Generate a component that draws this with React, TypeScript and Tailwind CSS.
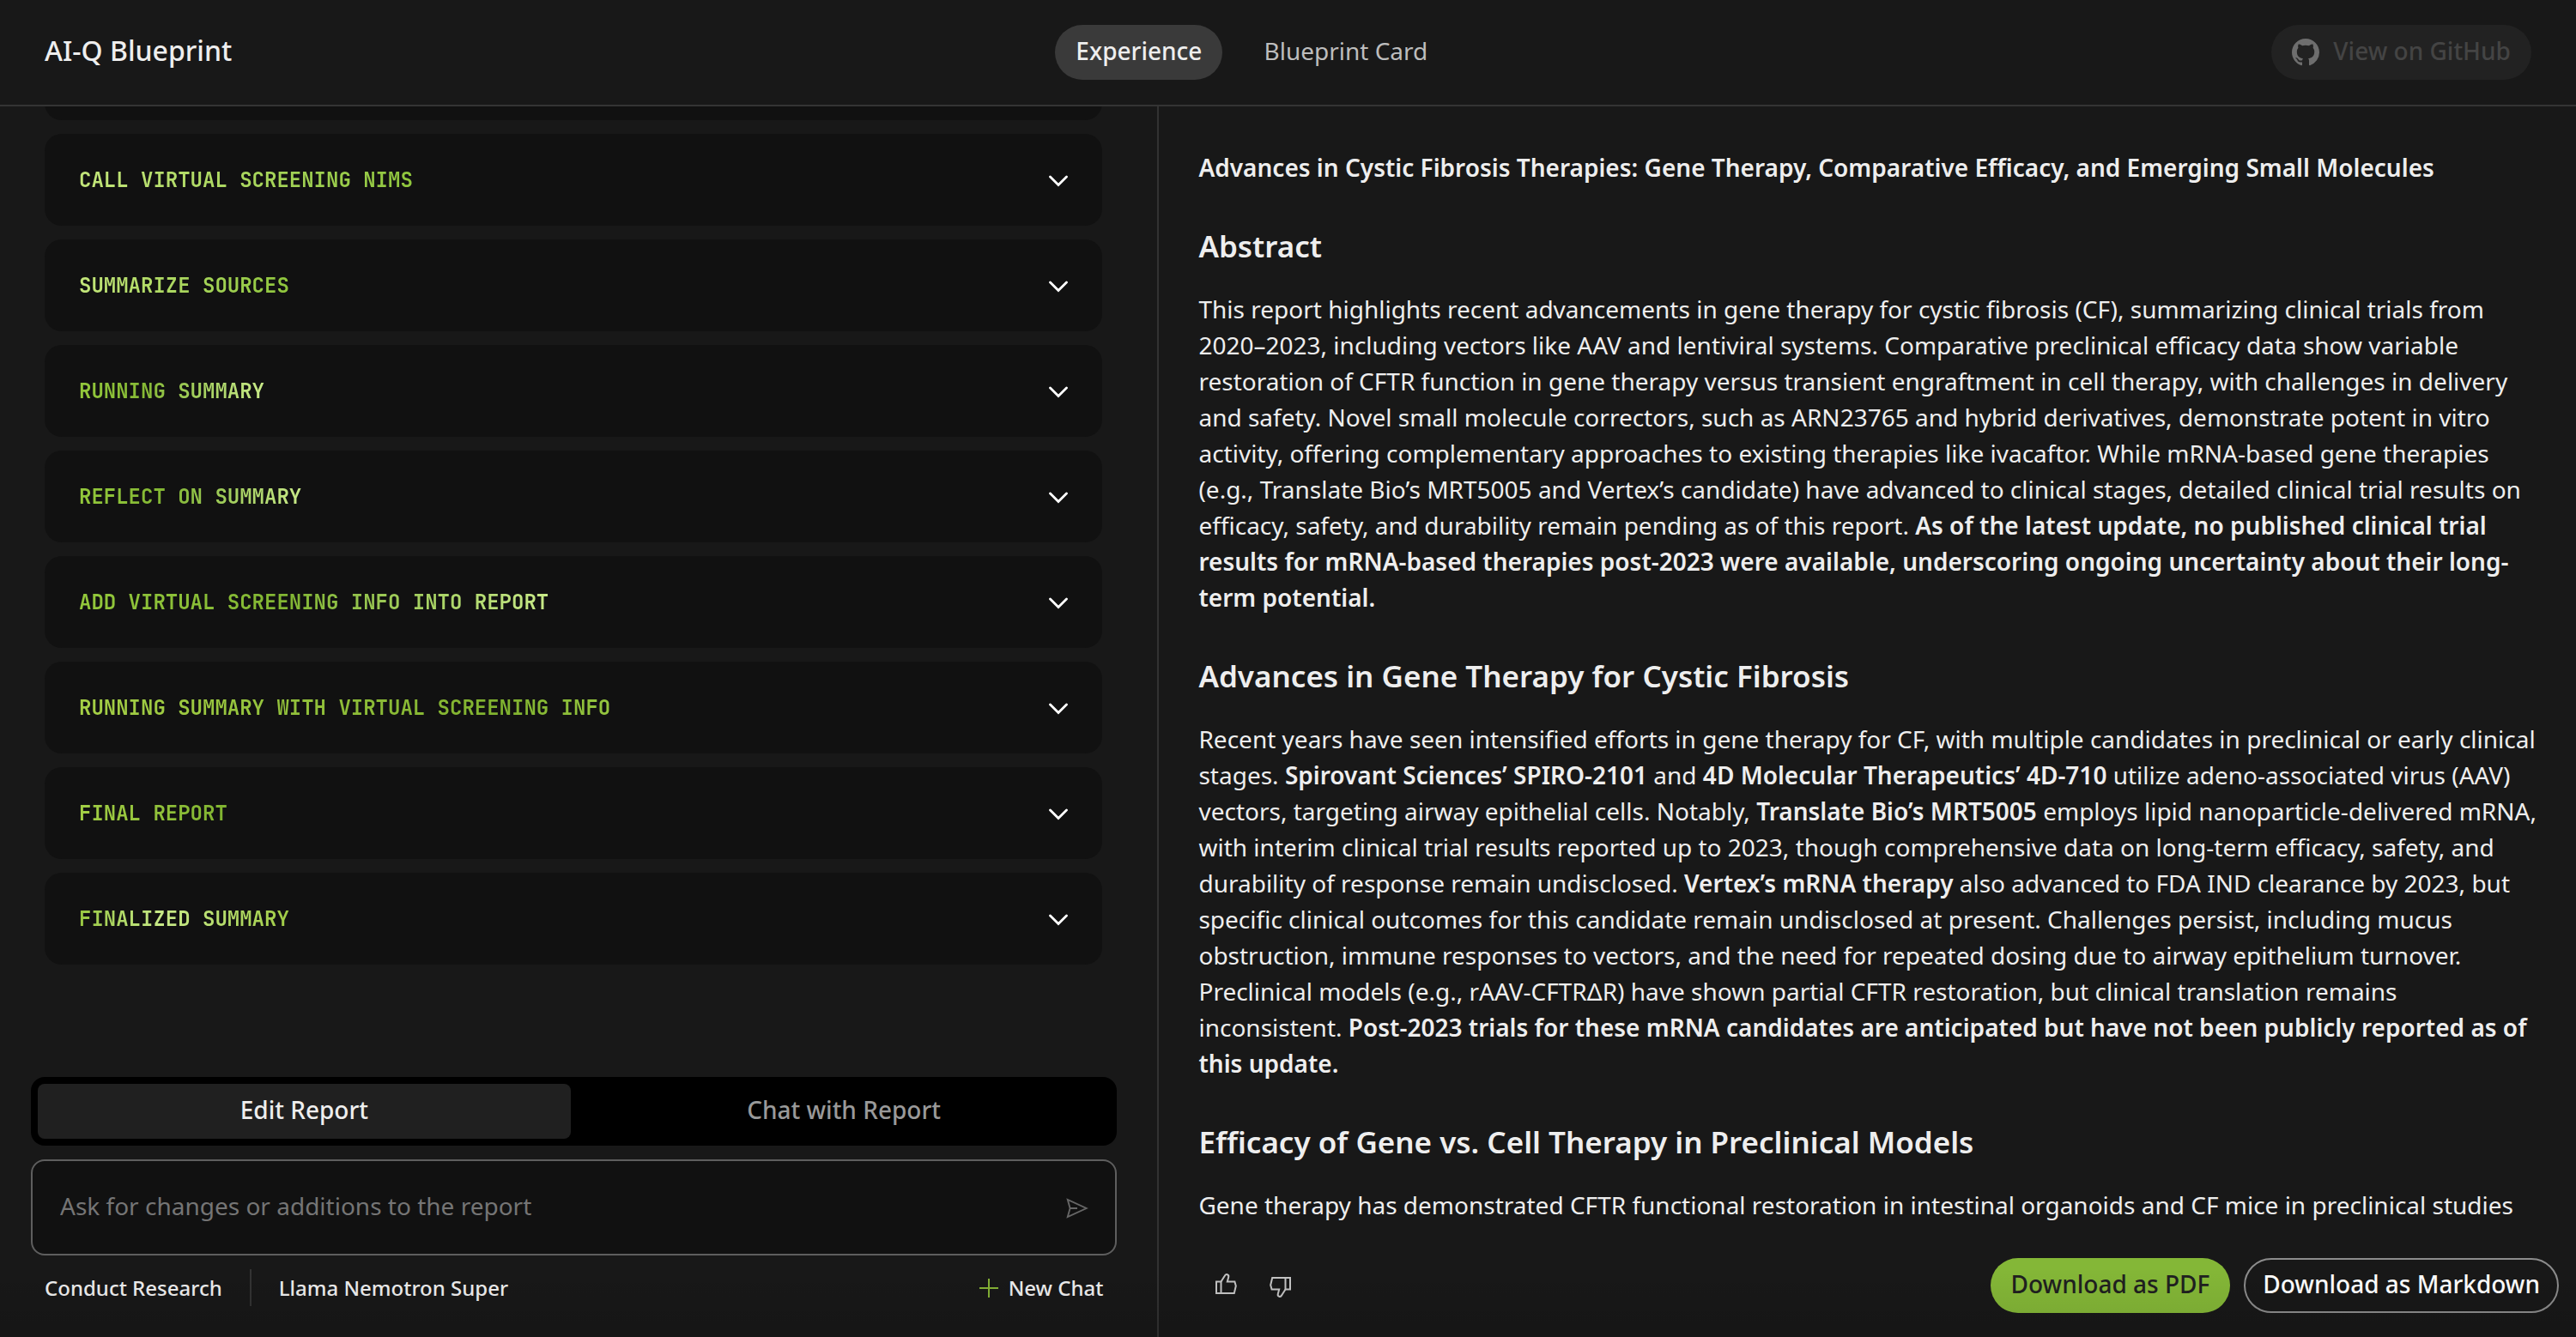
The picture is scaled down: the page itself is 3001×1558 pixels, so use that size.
import { ReactNode } from "react";

const steps = [
  { label: "CALL VIRTUAL SCREENING NIMS", tone: "bg-linear-to-r from-[#c3e67a] to-[#8fc63c]" },
  { label: "SUMMARIZE SOURCES", tone: "bg-linear-to-r from-[#c3e67a] to-[#8fc63c]" },
  { label: "RUNNING SUMMARY", tone: "bg-linear-to-r from-[#93c83b] via-[#86b935] via-35% to-[#c8ea88]" },
  { label: "REFLECT ON SUMMARY", tone: "bg-linear-to-r from-[#93c83b] via-[#82b633] via-40% to-[#c8ea88]" },
  { label: "ADD VIRTUAL SCREENING INFO INTO REPORT", tone: "bg-linear-to-r from-[#93c83b] via-[#82b633] via-45% to-[#c8ea88]" },
  { label: "RUNNING SUMMARY WITH VIRTUAL SCREENING INFO", tone: "bg-linear-to-r from-[#a5d046] via-[#80b22f] via-80% to-[#95c63f]" },
  { label: "FINAL REPORT", tone: "bg-linear-to-r from-[#a3cf45] to-[#80b430]" },
  { label: "FINALIZED SUMMARY", tone: "bg-linear-to-r from-[#98c740] via-[#c8ea88] via-40% to-[#a0cc45]" },
];

function ChevronDown() {
  return (
    <svg viewBox="0 0 24 24" className="size-6 text-white" fill="none" stroke="currentColor" strokeWidth="2.8" aria-hidden="true">
      <path d="M3.5 8 L13 17.5 L22.5 8" strokeLinecap="round" strokeLinejoin="miter" />
    </svg>
  );
}

function SendIcon() {
  return (
    <svg viewBox="0 0 32 32" className="size-8" fill="none" stroke="currentColor" strokeWidth="1.9" aria-hidden="true">
      <path d="M4.8 6.9 L7.6 17 L4.8 27 L26.6 17 Z M7.6 17 H16" />
    </svg>
  );
}

function ThumbIcon({ down = false }: { down?: boolean }) {
  return (
    <svg viewBox="0 0 32 32" className={down ? "size-8 rotate-180" : "size-8"} fill="none" stroke="currentColor" strokeWidth="2" aria-hidden="true">
      <path d="M5 11.5 H10.5 V25 H5 Z" />
      <path d="M10.5 11.5 L14.6 5 C15.4 3.4 16.6 2.8 17.8 3.2 C19.2 3.7 19.6 4.8 19.2 6.2 L17.8 11.5 H26.4 L27.8 16.5 L25.8 25 H10.5" />
    </svg>
  );
}

function GitHubMark() {
  return (
    <svg viewBox="0 0 16 16" className="size-8 text-[#6e6e6e]" fill="currentColor" aria-hidden="true">
      <path d="M8 0C3.58 0 0 3.58 0 8c0 3.54 2.29 6.53 5.47 7.59.4.07.55-.17.55-.38 0-.19-.01-.82-.01-1.49-2.01.37-2.53-.49-2.69-.94-.09-.23-.48-.94-.82-1.13-.28-.15-.68-.52-.01-.53.63-.01 1.08.58 1.23.82.72 1.21 1.87.87 2.33.66.07-.52.28-.87.51-1.07-1.78-.2-3.64-.89-3.64-3.95 0-.87.31-1.59.82-2.15-.08-.2-.36-1.02.08-2.12 0 0 .67-.21 2.2.82.64-.18 1.32-.27 2-.27s1.36.09 2 .27c1.53-1.04 2.2-.82 2.2-.82.44 1.1.16 1.92.08 2.12.51.56.82 1.27.82 2.15 0 3.07-1.87 3.75-3.65 3.95.29.25.54.73.54 1.48 0 1.07-.01 1.93-.01 2.2 0 .21.15.46.55.38A8.01 8.01 0 0 0 16 8c0-4.42-3.58-8-8-8z" />
    </svg>
  );
}

function Heading({ children }: { children: ReactNode }) {
  return <h2 className="mt-12 mb-[30px] text-[35px] leading-[45px] font-semibold">{children}</h2>;
}

function B({ children }: { children: ReactNode }) {
  return <strong className="font-semibold">{children}</strong>;
}

export default function App() {
  return (
    <div className="relative flex h-screen flex-col overflow-hidden bg-[#181818] font-['Noto_Sans',sans-serif] text-[28px] leading-[42px] text-[#eeeeee]">
      <header className="flex h-[124px] shrink-0 items-center justify-between border-b-2 border-[#343434] px-[52px]">
        <h1 className="pb-1 text-[32px] font-medium">AI-Q Blueprint</h1>
        <nav className="flex items-center gap-6">
          <button type="button" className="h-16 rounded-full bg-[#3a3a3a] px-6 pb-1 font-medium">Experience</button>
          <button type="button" className="h-16 rounded-full px-6 pb-1 text-[#bdbdbd]">Blueprint Card</button>
        </nav>
        <button type="button" disabled className="flex h-16 items-center gap-4 rounded-full bg-[#222222] px-6 font-medium text-[#444444]">
          <GitHubMark />
          <span className="pb-1">View on GitHub</span>
        </button>
      </header>

      <div className="flex min-h-0 flex-1">
        <section className="flex w-[45%] flex-col border-r-2 border-[#323232] pb-9">
          <div className="flex min-h-0 flex-1 flex-col justify-end gap-4 overflow-hidden pr-16 pb-[131px] pl-[52px]">
            <div className="h-[107px] shrink-0 rounded-[20px] bg-[#111111]" />
            {steps.map((s) => (
              <button key={s.label} type="button" aria-expanded="false" className="flex h-[107px] shrink-0 items-center justify-between rounded-[20px] bg-[#111111] px-10">
                <span className={`bg-clip-text font-['JetBrains_Mono','DejaVu_Sans_Mono',monospace] text-2xl font-semibold text-transparent ${s.tone}`}>
                  {s.label}
                </span>
                <ChevronDown />
              </button>
            ))}
          </div>

          <div className="flex shrink-0 flex-col gap-4 pr-[47px] pl-9">
            <div role="tablist" className="grid h-20 grid-cols-2 gap-2 rounded-2xl bg-black p-2">
              <button type="button" role="tab" aria-selected="true" className="rounded-lg bg-[#202020] pb-1 font-medium">Edit Report</button>
              <button type="button" role="tab" aria-selected="false" className="rounded-lg pb-1 font-medium text-[#999999]">Chat with Report</button>
            </div>
            <form className="flex h-28 items-center rounded-2xl border-2 border-[#5e5e5e] bg-[#111111] pr-7 pl-8">
              <input
                type="text"
                aria-label="Ask for changes or additions to the report"
                placeholder="Ask for changes or additions to the report"
                className="h-full min-w-0 flex-1 bg-transparent pb-1 outline-none placeholder:text-[#757575]"
              />
              <button type="submit" aria-label="Send" className="text-[#666666]">
                <SendIcon />
              </button>
            </form>
            <div className="flex h-[43px] items-center px-4 text-2xl font-medium">
              <button type="button">Conduct Research</button>
              <span className="mx-8 h-full w-0.5 bg-[#333333]" />
              <button type="button">Llama Nemotron Super</button>
              <button type="button" className="ml-auto flex items-center gap-3">
                <svg viewBox="0 0 22 22" className="size-[22px] text-[#84b135]" stroke="currentColor" strokeWidth="2" aria-hidden="true">
                  <path d="M11 0V22M0 11H22" />
                </svg>
                New Chat
              </button>
            </div>
          </div>
        </section>

        <section className="flex min-w-0 flex-1 flex-col">
          <article className="min-h-0 flex-1 overflow-hidden pt-[50px] pr-10 pl-[46px]">
            <p><B>Advances in Cystic Fibrosis Therapies: Gene Therapy, Comparative Efficacy, and Emerging Small Molecules</B></p>
            <Heading>Abstract</Heading>
            <p>
              This report highlights recent advancements in gene therapy for cystic fibrosis (CF), summarizing clinical trials from 2020–2023, including vectors like AAV and lentiviral systems. Comparative preclinical efficacy data show variable restoration of CFTR function in gene therapy versus transient engraftment in cell therapy, with challenges in delivery and safety. Novel small molecule correctors, such as ARN23765 and hybrid derivatives, demonstrate potent in vitro activity, offering complementary approaches to existing therapies like ivacaftor. While mRNA-based gene therapies (e.g., Translate Bio’s MRT5005 and Vertex’s candidate) have advanced to clinical stages, detailed clinical trial results on efficacy, safety, and durability remain pending as of this report. <B>As of the latest update, no published clinical trial results for mRNA-based therapies post-2023 were available, underscoring ongoing uncertainty about their long-term potential.</B>
            </p>
            <Heading>Advances in Gene Therapy for Cystic Fibrosis</Heading>
            <p>
              Recent years have seen intensified efforts in gene therapy for CF, with multiple candidates in preclinical or early clinical stages. <B>Spirovant Sciences’ SPIRO-2101</B> and <B>4D Molecular Therapeutics’ 4D-710</B> utilize adeno-associated virus (AAV) vectors, targeting airway epithelial cells. Notably, <B>Translate Bio’s MRT5005</B> employs lipid nanoparticle-delivered mRNA, with interim clinical trial results reported up to 2023, though comprehensive data on long-term efficacy, safety, and durability of response remain undisclosed. <B>Vertex’s mRNA therapy</B> also advanced to FDA IND clearance by 2023, but specific clinical outcomes for this candidate remain undisclosed at present. Challenges persist, including mucus obstruction, immune responses to vectors, and the need for repeated dosing due to airway epithelium turnover. Preclinical models (e.g., rAAV-CFTRΔR) have shown partial CFTR restoration, but clinical translation remains inconsistent. <B>Post-2023 trials for these mRNA candidates are anticipated but have not been publicly reported as of this update.</B>
            </p>
            <Heading>Efficacy of Gene vs. Cell Therapy in Preclinical Models</Heading>
            <p>Gene therapy has demonstrated CFTR functional restoration in intestinal organoids and CF mice in preclinical studies</p>
          </article>
          <footer className="mt-8 mb-7 flex h-16 shrink-0 items-center pr-5 pl-[46px]">
            <button type="button" aria-label="Like" className="flex size-16 items-center justify-center text-[#c4c4c4]"><ThumbIcon /></button>
            <button type="button" aria-label="Dislike" className="flex size-16 items-center justify-center text-[#c4c4c4]"><ThumbIcon down /></button>
            <div className="ml-auto flex gap-4">
              <button type="button" className="h-16 rounded-full bg-[#84b737] px-6 pb-1 font-medium text-[#202020]">Download as PDF</button>
              <button type="button" className="h-16 rounded-full border-2 border-[#8c8c8c] px-5 pb-1 font-medium text-white">Download as Markdown</button>
            </div>
          </footer>
        </section>
      </div>
      <div className="pointer-events-none absolute inset-x-0 bottom-0 h-20 bg-linear-to-b from-transparent to-black/10" />
    </div>
  );
}
